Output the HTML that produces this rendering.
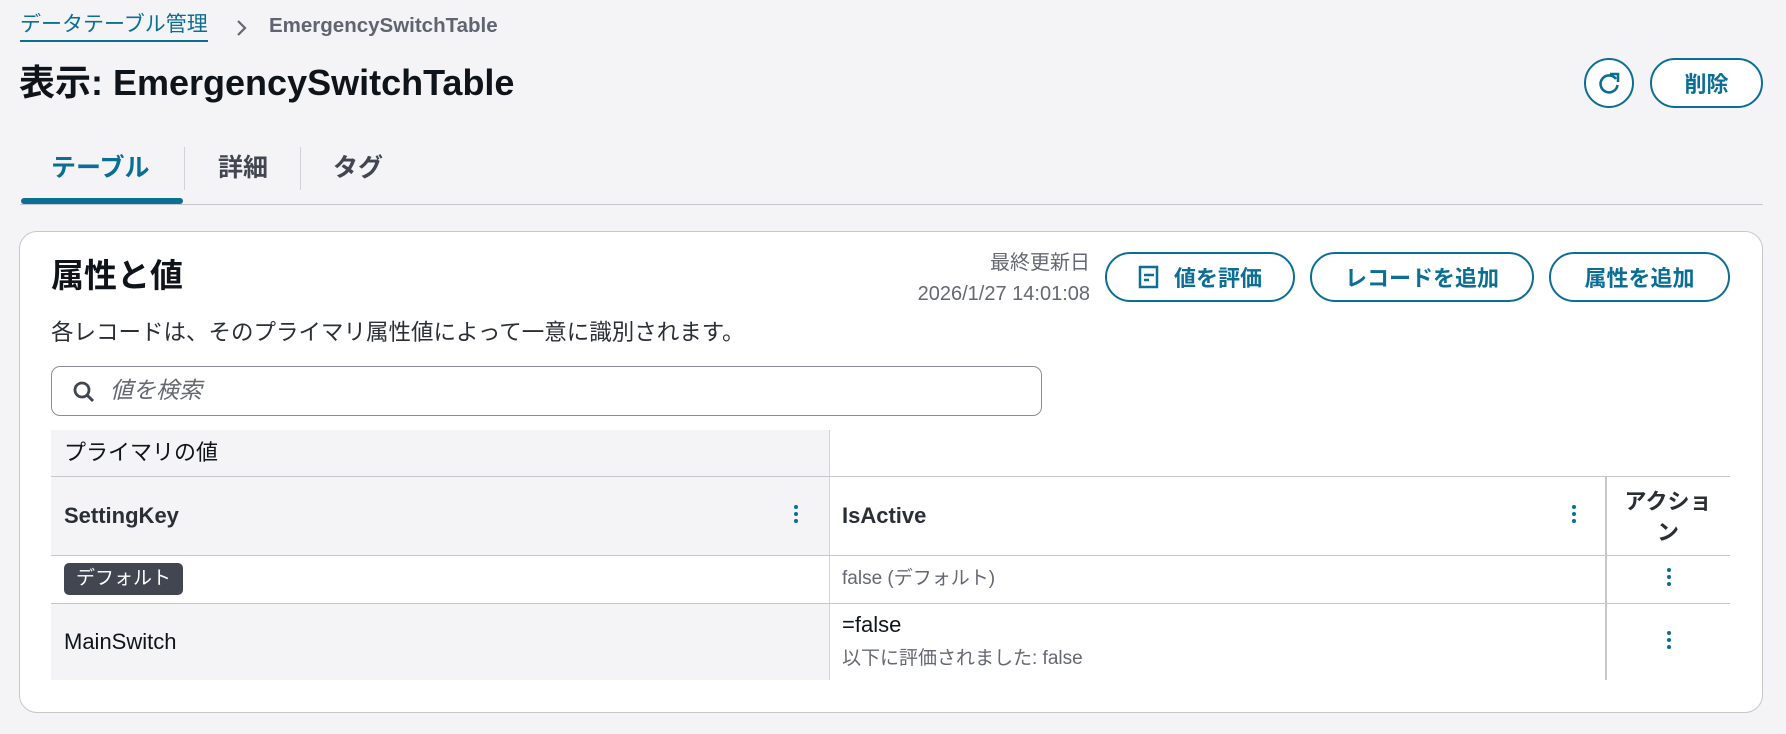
<!DOCTYPE html>
<html><head><meta charset="utf-8">
<style>
*{box-sizing:border-box;margin:0;padding:0}
body{width:1786px;height:734px;background:#f4f4f6;font-family:"Liberation Sans","Noto Sans CJK JP",sans-serif;color:#0f141a;position:relative;overflow:hidden}
.a{position:absolute;white-space:nowrap}
.blue{color:#0b6e94}
.btn{position:absolute;border:2px solid #0b6e94;border-radius:26px;background:#fff;color:#0b6e94;font-weight:bold;font-size:22px;display:flex;align-items:center;justify-content:center}
.dots{position:absolute;width:4px}
.dots i{display:block;width:4px;height:4px;border-radius:2px;background:#0b6e94;margin-bottom:3px}
</style></head><body>
<div class="a blue" style="left:20px;top:12px;font-size:21px;border-bottom:2px solid #0b6e94;padding-bottom:2px;line-height:26px">データテーブル管理</div>
<svg class="a" style="left:236px;top:19px" width="12" height="18"><path d="M2 2l7 7-7 7" stroke="#656871" stroke-width="2.2" fill="none"/></svg>
<div class="a" style="left:269px;top:14px;font-size:20.5px;font-weight:bold;color:#5f6470;line-height:24px">EmergencySwitchTable</div>
<div class="a" style="left:19px;top:62px;font-size:36px;font-weight:bold;line-height:42px">表示: EmergencySwitchTable</div>
<div class="a" style="left:1584px;top:58px;width:50px;height:50px;border:2px solid #0b6e94;border-radius:50%;background:#fff"></div>
<svg class="a" style="left:1596px;top:70px" width="26" height="26" viewBox="0 0 26 26"><path d="M20 9A8.5 8.5 0 1 0 21.5 15" stroke="#0b6e94" stroke-width="2.6" fill="none"/><path d="M14 4h8v8" stroke="#0b6e94" stroke-width="2.6" fill="none"/></svg>
<div class="btn" style="left:1650px;top:58px;width:113px;height:50px">削除</div>
<div class="a blue" style="left:51px;top:153px;font-size:25px;font-weight:bold;line-height:30px">テーブル</div>
<div class="a" style="left:218px;top:153px;font-size:25px;font-weight:bold;line-height:30px;color:#414650">詳細</div>
<div class="a" style="left:333px;top:153px;font-size:25px;font-weight:bold;line-height:30px;color:#414650">タグ</div>
<div class="a" style="left:184px;top:147px;width:1px;height:43px;background:#d1d3d8"></div>
<div class="a" style="left:300px;top:147px;width:1px;height:43px;background:#d1d3d8"></div>
<div class="a" style="left:20px;top:204px;width:1743px;height:1px;background:#c6c6cd"></div>
<div class="a" style="left:21px;top:198px;width:162px;height:6px;background:#0b6e94;border-radius:3px"></div>
<div class="a" style="left:19px;top:231px;width:1744px;height:482px;background:#fff;border:1px solid #c6c6cd;border-radius:18px"></div>
<div class="a" style="left:51px;top:257px;font-size:33px;font-weight:bold;line-height:38px">属性と値</div>
<div class="a" style="left:51px;top:319px;font-size:22.5px;line-height:27px;color:#2a2e35">各レコードは、そのプライマリ属性値によって一意に識別されます。</div>
<div class="a" style="left:850px;top:251px;width:240px;text-align:right;font-size:20px;color:#656871;line-height:24px">最終更新日</div>
<div class="a" style="left:850px;top:282px;width:240px;text-align:right;font-size:20px;color:#656871;line-height:24px">2026/1/27 14:01:08</div>
<div class="btn" style="left:1105px;top:252px;width:190px;height:50px"><svg width="22" height="24" style="margin-right:14px"><rect x="2" y="2" width="17" height="20" stroke="#0b6e94" stroke-width="2.5" fill="none"/><path d="M6 10h10M6 15h5" stroke="#0b6e94" stroke-width="2.5"/></svg>値を評価</div>
<div class="btn" style="left:1310px;top:252px;width:224px;height:50px">レコードを追加</div>
<div class="btn" style="left:1549px;top:252px;width:181px;height:50px">属性を追加</div>
<div class="a" style="left:51px;top:366px;width:991px;height:50px;border:1px solid #8c8c94;border-radius:9px;background:#fff"></div>
<svg class="a" style="left:72px;top:380px" width="24" height="24"><circle cx="10" cy="10" r="7" stroke="#414650" stroke-width="2.8" fill="none"/><path d="M15 15l6 6" stroke="#414650" stroke-width="3"/></svg>
<div class="a" style="left:110px;top:377px;font-size:23px;font-style:italic;color:#656871;line-height:27px">値を検索</div>
<div class="a" style="left:51px;top:430px;width:778px;height:250px;background:#f4f4f6"></div>
<div class="a" style="left:51px;top:555px;width:778px;height:48px;background:#fff"></div>
<div class="a" style="left:829px;top:430px;width:1px;height:250px;background:#d1d3d8"></div>
<div class="a" style="left:1605px;top:476px;width:2px;height:204px;background:#c6c6cd"></div>
<div class="a" style="left:51px;top:476px;width:1679px;height:1px;background:#c6c6cd"></div>
<div class="a" style="left:51px;top:555px;width:1679px;height:1px;background:#c6c6cd"></div>
<div class="a" style="left:51px;top:603px;width:1679px;height:1px;background:#c6c6cd"></div>
<div class="a" style="left:64px;top:439px;font-size:22px;line-height:27px">プライマリの値</div>
<div class="a" style="left:64px;top:502px;font-size:22px;font-weight:bold;line-height:27px;color:#2a2e35">SettingKey</div>
<div class="a" style="left:842px;top:502px;font-size:22px;font-weight:bold;line-height:27px;color:#2a2e35">IsActive</div>
<div class="a" style="left:1612px;top:486px;width:112px;text-align:center;font-size:22px;font-weight:bold;line-height:31px;color:#2a2e35;white-space:normal">アクショ<br>ン</div>
<div class="dots" style="left:794px;top:505px"><i></i><i></i><i></i></div>
<div class="dots" style="left:1572px;top:505px"><i></i><i></i><i></i></div>
<div class="a" style="left:64px;top:563px;height:32px;padding:0 12px;background:#424650;color:#fff;border-radius:5px;font-size:19px;line-height:32px">デフォルト</div>
<div class="a" style="left:842px;top:567px;font-size:19px;color:#656871;line-height:24px">false (デフォルト)</div>
<div class="dots" style="left:1667px;top:568px"><i></i><i></i><i></i></div>
<div class="a" style="left:64px;top:628px;font-size:22px;line-height:27px">MainSwitch</div>
<div class="a" style="left:842px;top:611px;font-size:22px;line-height:27px">=false</div>
<div class="a" style="left:842px;top:647px;font-size:19px;color:#656871;line-height:24px">以下に評価されました: false</div>
<div class="dots" style="left:1667px;top:631px"><i></i><i></i><i></i></div>
</body></html>
